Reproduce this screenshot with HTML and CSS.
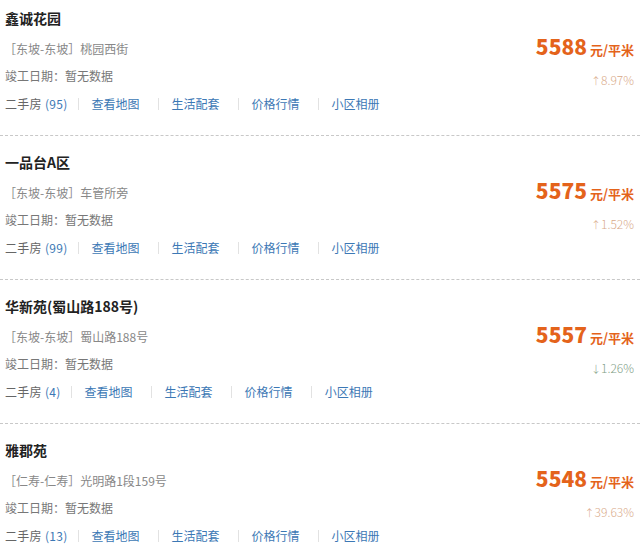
FILE: index.html
```html
<!DOCTYPE html>
<html lang="zh-CN">

<head>
    <meta charset="UTF-8" />
    <meta name="viewport" content="width=device-width, initial-scale=1.0" />
    <title>小区列表</title>
    <link rel="stylesheet" href="styles.css">
</head>

<body>
    <ul class="estate-list">
        <li class="estate">
            <div class="info">
                <h3 class="name">鑫诚花园</h3>
                <p class="addr">［东坡-东坡］桃园西街</p>
                <p class="date">竣工日期：暂无数据</p>
                <p class="links">
                    <span class="resale">二手房 <a href="#">(95)</a></span>
                    <a href="#">查看地图</a>
                    <a href="#">生活配套</a>
                    <a href="#">价格行情</a>
                    <a href="#">小区相册</a>
                </p>
            </div>
            <div class="price-box">
                <p class="price"><strong>5588</strong> 元/平米</p>
                <p class="trend up"><i>↑</i>8.97%</p>
            </div>
        </li>
        <li class="estate">
            <div class="info">
                <h3 class="name">一品台A区</h3>
                <p class="addr">［东坡-东坡］车管所旁</p>
                <p class="date">竣工日期：暂无数据</p>
                <p class="links">
                    <span class="resale">二手房 <a href="#">(99)</a></span>
                    <a href="#">查看地图</a>
                    <a href="#">生活配套</a>
                    <a href="#">价格行情</a>
                    <a href="#">小区相册</a>
                </p>
            </div>
            <div class="price-box">
                <p class="price"><strong>5575</strong> 元/平米</p>
                <p class="trend up"><i>↑</i>1.52%</p>
            </div>
        </li>
        <li class="estate">
            <div class="info">
                <h3 class="name">华新苑(蜀山路188号)</h3>
                <p class="addr">［东坡-东坡］蜀山路188号</p>
                <p class="date">竣工日期：暂无数据</p>
                <p class="links">
                    <span class="resale">二手房 <a href="#">(4)</a></span>
                    <a href="#">查看地图</a>
                    <a href="#">生活配套</a>
                    <a href="#">价格行情</a>
                    <a href="#">小区相册</a>
                </p>
            </div>
            <div class="price-box">
                <p class="price"><strong>5557</strong> 元/平米</p>
                <p class="trend down"><i>↓</i>1.26%</p>
            </div>
        </li>
        <li class="estate">
            <div class="info">
                <h3 class="name">雅郡苑</h3>
                <p class="addr">［仁寿-仁寿］光明路1段159号</p>
                <p class="date">竣工日期：暂无数据</p>
                <p class="links">
                    <span class="resale">二手房 <a href="#">(13)</a></span>
                    <a href="#">查看地图</a>
                    <a href="#">生活配套</a>
                    <a href="#">价格行情</a>
                    <a href="#">小区相册</a>
                </p>
            </div>
            <div class="price-box">
                <p class="price"><strong>5548</strong> 元/平米</p>
                <p class="trend up"><i>↑</i>39.63%</p>
            </div>
        </li>
    </ul>
</body>

</html>
```

FILE: styles.css
```css
/* Reset */
* {
    box-sizing: border-box;
    margin: 0;
    padding: 0;
}

body {
    font-family: "Microsoft YaHei", "Noto Sans CJK SC", sans-serif;
    background-color: #fff;
    color: #666;
    font-size: 12px;
}

a {
    color: #3c78b5;
    text-decoration: none;
}

.estate-list {
    list-style: none;
}

.estate {
    display: flex;
    justify-content: space-between;
    padding: 8px 6px 17px 5px;
    border-top: 1px dashed #c8c8c8;
}

.estate:first-child {
    border-top: none;
    padding-top: 0;
}

.name {
    font-size: 14px;
    font-weight: 700;
    color: #222;
    line-height: 36px;
}

.addr {
    line-height: 26px;
    color: #888;
    margin-left: -1px;
}

.date {
    line-height: 28px;
    color: #777;
}

.links {
    line-height: 28px;
    display: flex;
    align-items: center;
}

.links a {
    padding: 0 18px 0 13px;
    border-left: 1px solid #e2e2e2;
    line-height: 12px;
}

.links .resale {
    padding-right: 10px;
    line-height: 28px;
    letter-spacing: 0.3px;
}

.links .resale a {
    border: none;
    padding: 0;
}

.links a:last-child {
    padding-right: 0;
}

.price-box {
    padding-top: 32px;
    text-align: right;
}

.price {
    line-height: 28px;
    color: #e4631b;
    font-size: 13px;
    font-weight: 700;
}

.price strong {
    font-size: 21px;
}

.trend {
    line-height: 28px;
    margin-top: 2px;
    font-weight: 300;
}

.trend i {
    font-style: normal;
    font-size: 10px;
}

.trend.up {
    color: #d9aa8a;
}

.trend.down {
    color: #7f9e86;
}
```
